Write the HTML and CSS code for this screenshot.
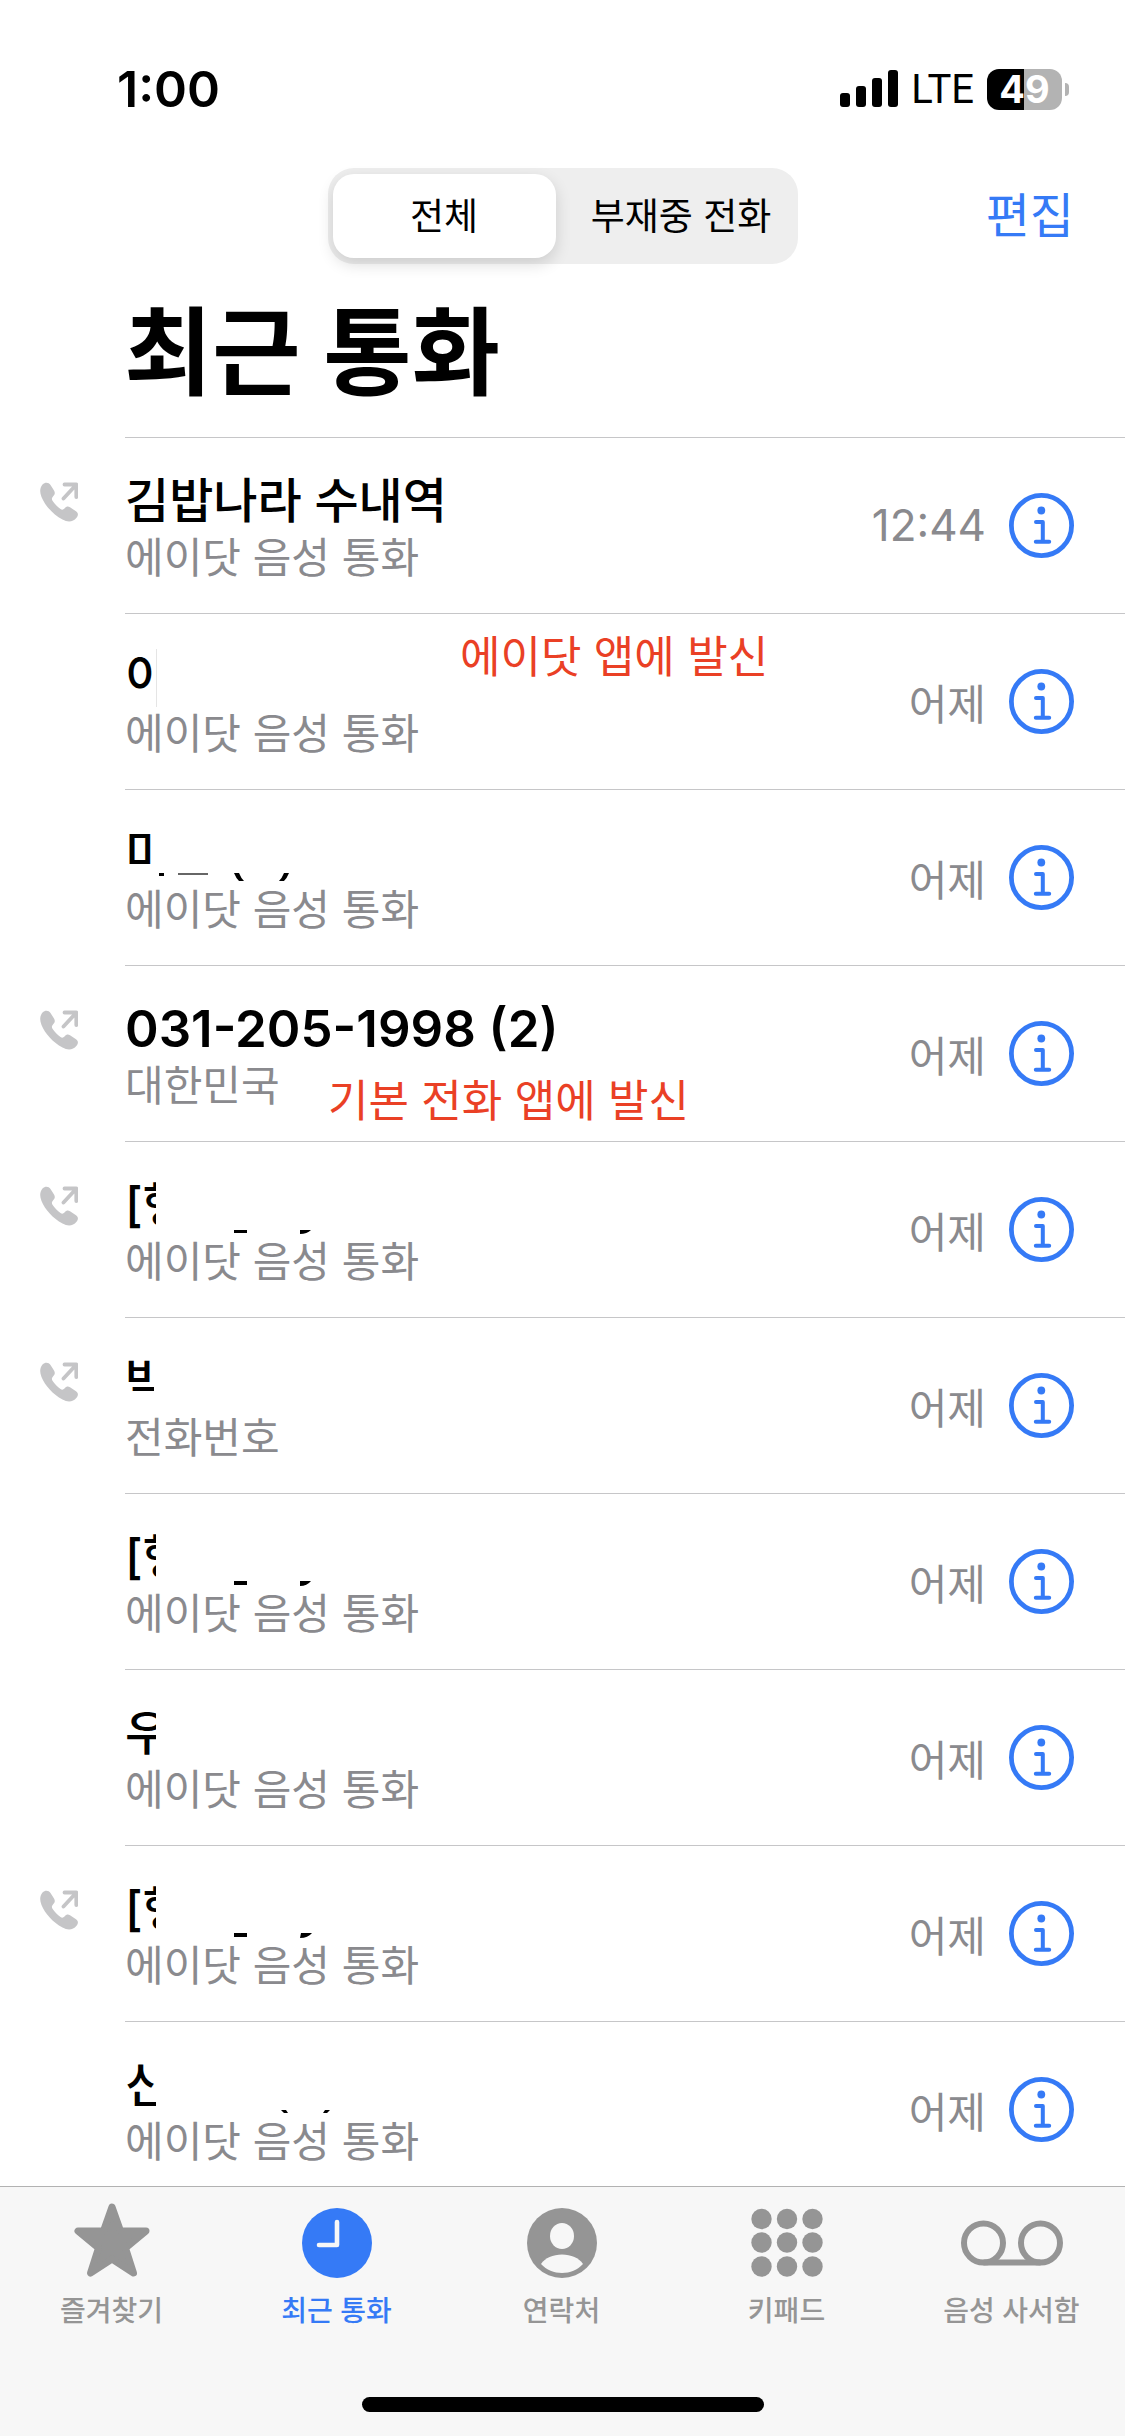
FILE: index.html
```html
<!DOCTYPE html>
<html lang="ko">
<head>
    <meta charset="UTF-8">
    <meta name="viewport" content="width=device-width, initial-scale=1.0">
    <title>최근 통화</title>
    <link rel="stylesheet" href="styles.css">
</head>
<body>
<!-- Shared icons -->
<svg class="sprite" aria-hidden="true">
    <symbol id="icon-outgoing" viewBox="0 0 38 40">
        <path d="M2.500 2.500C5 0 8.500 0 10.500 3L14 8.500C15.300 10.700 15 12.500 13 14.500C11.700 16 11.500 17 12.500 18.800C14.500 22 17.500 25 20.500 27C22 28 23.300 27.800 24.500 26.500C26.500 24.300 28 24 30 25.300L36 29.300C38.300 31 38.600 33 36.500 35.700C33 40 28 40.500 22.500 37.500C13 32.500 5 23.500 1.500 15C-.500 10-.200 6 2.500 2.500Z" fill="#c5c5c7"/>
        <path d="M23.500 16.500L36 3M24.500 2.500H36.300V15" fill="none" stroke="#c5c5c7" stroke-width="3.800" stroke-linecap="round" stroke-linejoin="round"/>
    </symbol>
    <symbol id="icon-info" viewBox="0 0 65 65">
        <circle cx="32.500" cy="32.500" r="30.100" fill="none" stroke="#357af6" stroke-width="4.800"/>
        <circle cx="32.300" cy="17.500" r="3.900" fill="#357af6"/>
        <path d="M27 29H33.800V48.500M26.800 48.700H40.200" fill="none" stroke="#357af6" stroke-width="4" stroke-linecap="round" stroke-linejoin="round"/>
    </symbol>
</svg>

<!-- Status bar -->
<div class="status">
    <span class="clock">1:00</span>
    <div class="status-right">
        <svg class="signal" viewBox="0 0 58 38" aria-hidden="true">
            <rect x="0" y="23" width="10" height="14" rx="3"/>
            <rect x="16" y="16" width="10" height="21" rx="3"/>
            <rect x="32" y="8" width="10" height="29" rx="3"/>
            <rect x="48" y="0" width="10" height="37" rx="3"/>
        </svg>
        <span class="network">LTE</span>
        <span class="battery">49</span>
    </div>
</div>

<!-- Toolbar -->
<header class="toolbar">
    <div class="segmented">
        <button class="segment selected">전체</button>
        <button class="segment">부재중 전화</button>
    </div>
    <button class="edit">편집</button>
</header>
<h1>최근 통화</h1>

<!-- Call list -->
<ul class="calls">
    <li class="call">
        <svg class="outgoing"><use href="#icon-outgoing"/></svg>
        <div class="who">
            <div class="name">김밥나라 수내역</div>
            <div class="kind">에이닷 음성 통화</div>
        </div>
        <time class="clock-time">12:44</time>
        <button class="info" aria-label="정보"><svg><use href="#icon-info"/></svg></button>
    </li>
    <li class="call">
        <div class="who">
            <div class="name"><span class="cut edge">이</span></div>
            <div class="kind">에이닷 음성 통화</div>
        </div>
        <time>어제</time>
        <button class="info" aria-label="정보"><svg><use href="#icon-info"/></svg></button>
        <span class="note note-app">에이닷 앱에 발신</span>
    </li>
    <li class="call">
        <div class="who">
            <div class="name"><span class="cut low">미</span>
                <svg class="bits" viewBox="0 0 220 16"><path d="M34 3h5v3h-5zM109 3h5q2 5 5 8h-5q-3-3-5-8zM159 3h5q-2 5-5 8h-5q3-3 5-8z"/><path d="M53 3h30v2H53z" fill="#666"/></svg>
            </div>
            <div class="kind">에이닷 음성 통화</div>
        </div>
        <time>어제</time>
        <button class="info" aria-label="정보"><svg><use href="#icon-info"/></svg></button>
    </li>
    <li class="call">
        <svg class="outgoing"><use href="#icon-outgoing"/></svg>
        <div class="who">
            <div class="name number">031-205-1998 (2)</div>
            <div class="kind">대한민국</div>
        </div>
        <time>어제</time>
        <button class="info" aria-label="정보"><svg><use href="#icon-info"/></svg></button>
        <span class="note note-phone">기본 전화 앱에 발신</span>
    </li>
    <li class="call">
        <svg class="outgoing"><use href="#icon-outgoing"/></svg>
        <div class="who">
            <div class="name"><span class="cut">[행</span>
                <svg class="bits" viewBox="0 0 220 16"><path d="M109 8h13v3h-13zM175 8h11q-4 4-11 4z"/></svg>
            </div>
            <div class="kind">에이닷 음성 통화</div>
        </div>
        <time>어제</time>
        <button class="info" aria-label="정보"><svg><use href="#icon-info"/></svg></button>
    </li>
    <li class="call">
        <svg class="outgoing"><use href="#icon-outgoing"/></svg>
        <div class="who">
            <div class="name"><span class="cut low">박</span></div>
            <div class="kind">전화번호</div>
        </div>
        <time>어제</time>
        <button class="info" aria-label="정보"><svg><use href="#icon-info"/></svg></button>
    </li>
    <li class="call">
        <div class="who">
            <div class="name"><span class="cut">[행</span>
                <svg class="bits" viewBox="0 0 220 16"><path d="M109 7h13v4h-13zM175 7h11q-4 5-11 5z"/></svg>
            </div>
            <div class="kind">에이닷 음성 통화</div>
        </div>
        <time>어제</time>
        <button class="info" aria-label="정보"><svg><use href="#icon-info"/></svg></button>
    </li>
    <li class="call">
        <div class="who">
            <div class="name"><span class="cut">우</span></div>
            <div class="kind">에이닷 음성 통화</div>
        </div>
        <time>어제</time>
        <button class="info" aria-label="정보"><svg><use href="#icon-info"/></svg></button>
    </li>
    <li class="call">
        <svg class="outgoing"><use href="#icon-outgoing"/></svg>
        <div class="who">
            <div class="name"><span class="cut">[행</span>
                <svg class="bits" viewBox="0 0 220 16"><path d="M109 7h13v4h-13zM176 7h11q-4 5-12 5z"/></svg>
            </div>
            <div class="kind">에이닷 음성 통화</div>
        </div>
        <time>어제</time>
        <button class="info" aria-label="정보"><svg><use href="#icon-info"/></svg></button>
    </li>
    <li class="call">
        <div class="who">
            <div class="name"><span class="cut">신</span>
                <svg class="bits" viewBox="0 0 220 16"><path d="M156 8h5l2 3h-4zM200 8h5l-3 3h-4z"/></svg>
            </div>
            <div class="kind">에이닷 음성 통화</div>
        </div>
        <time>어제</time>
        <button class="info" aria-label="정보"><svg><use href="#icon-info"/></svg></button>
    </li>
</ul>

<!-- Tab bar -->
<nav class="tabs">
    <a class="tab" href="#">
        <svg viewBox="0 0 104 80" aria-hidden="true">
            <path d="M52 8L60.500 32H86L65.500 49L73.500 74L52 60L30.500 74L38.500 49L18 32H43.500Z" fill="#959595" stroke="#959595" stroke-width="7" stroke-linejoin="round"/>
        </svg>
        즐겨찾기
    </a>
    <a class="tab active" href="#">
        <svg viewBox="0 0 104 80" aria-hidden="true">
            <circle cx="52" cy="44" r="35" fill="#357af6"/>
            <path d="M52 23V46H34" fill="none" stroke="#f7f7f7" stroke-width="4.600" stroke-linecap="round" stroke-linejoin="round"/>
        </svg>
        최근 통화
    </a>
    <a class="tab" href="#">
        <svg viewBox="0 0 104 80" aria-hidden="true">
            <circle cx="52" cy="44" r="35" fill="#959595"/>
            <ellipse cx="52" cy="37" rx="12" ry="13" fill="#f7f7f7"/>
            <path d="M31 65C35 59 43 55.500 52 55.500S69 59 73 65C67.500 71 60 74 52 74S36.500 71 31 65Z" fill="#f7f7f7"/>
        </svg>
        연락처
    </a>
    <a class="tab" href="#">
        <svg viewBox="0 0 104 80" aria-hidden="true" fill="#959595">
            <circle cx="26.500" cy="20" r="10.200"/><circle cx="52" cy="20" r="10.200"/><circle cx="77.500" cy="20" r="10.200"/>
            <circle cx="26.500" cy="43.500" r="10.200"/><circle cx="52" cy="43.500" r="10.200"/><circle cx="77.500" cy="43.500" r="10.200"/>
            <circle cx="26.500" cy="67.500" r="10.200"/><circle cx="52" cy="67.500" r="10.200"/><circle cx="77.500" cy="67.500" r="10.200"/>
        </svg>
        키패드
    </a>
    <a class="tab" href="#">
        <svg viewBox="0 0 104 80" aria-hidden="true" fill="none" stroke="#959595" stroke-width="6">
            <circle cx="23.500" cy="44" r="19.500"/>
            <circle cx="80.500" cy="44" r="19.500"/>
            <path d="M23.500 63.500H80.500"/>
        </svg>
        음성 사서함
    </a>
    <div class="home"></div>
</nav>
</body>
</html>
```
FILE: styles.css
```css
* {
    box-sizing: border-box;
}
body {
    display: flex;
    flex-direction: column;
    height: 100vh;
    margin: 0;
    background: #fff;
    color: #000;
    font-family: Inter, "Noto Sans CJK KR", sans-serif;
}
button {
    padding: 0;
    border: none;
    background: none;
    color: inherit;
    font: inherit;
    cursor: pointer;
}
.sprite {
    position: absolute;
    width: 0;
    height: 0;
}

/* Status bar */
.status {
    display: flex;
    justify-content: space-between;
    align-items: center;
    height: 168px;
    padding: 10px 56px 0 117px;
}
.clock {
    font-size: 50px;
    font-weight: 600;
}
.status-right {
    display: flex;
    align-items: center;
}
.signal {
    width: 58px;
    height: 38px;
}
.network {
    margin: 0 13px;
    font-size: 40px;
    font-family: Roboto, sans-serif;
}
.battery {
    position: relative;
    width: 75px;
    margin-right: 7px;
    border-radius: 12px;
    background: linear-gradient(to right, #000 50%, #b3b3b3 50%);
    color: #fff;
    font-size: 38px;
    font-weight: 700;
    line-height: 41px;
    text-align: center;
}
.battery::after {
    content: "";
    position: absolute;
    top: 14px;
    right: -7px;
    width: 4px;
    height: 13px;
    border-radius: 0 4px 4px 0;
    background: #b3b3b3;
}

/* Toolbar */
.toolbar {
    display: grid;
    grid-template-columns: 1fr 470px 1fr;
    align-items: center;
    padding: 0 51px;
}
.segmented {
    display: grid;
    grid-template-columns: 1fr 1fr;
    gap: 14px;
    grid-column: 2;
    height: 96px;
    padding: 6px 5px;
    border-radius: 26px;
    background: #eee;
}
.segment {
    padding-bottom: 4px;
    border-radius: 21px;
    font-size: 37px;
    white-space: nowrap;
}
.segment.selected {
    background: #fff;
    box-shadow: 0 6px 16px rgba(0, 0, 0, 0.14);
}
.edit {
    justify-self: end;
    padding-bottom: 8px;
    color: #357af6;
    font-size: 48px;
}
h1 {
    margin: 0;
    padding: 28px 51px 25px 124px;
    font-size: 96px;
    font-weight: 700;
    line-height: 120px;
}

/* Call list */
.calls {
    flex: 1;
    min-height: 0;
    margin: 0;
    padding: 0;
    overflow: hidden;
    list-style: none;
}
.call {
    position: relative;
    display: grid;
    grid-template-columns: 85px 1fr auto 65px;
    height: 176px;
    padding: 0 51px 0 40px;
}
.call::before {
    content: "";
    position: absolute;
    top: 0;
    right: 0;
    left: 125px;
    height: 1px;
    background: #c6c6c8;
}
.outgoing {
    grid-column: 1;
    width: 38px;
    height: 40px;
    margin-top: 45px;
}
.who {
    grid-column: 2;
    padding-top: 36px;
}
.name {
    position: relative;
    height: 58px;
    font-size: 48px;
    font-weight: 500;
    line-height: 56px;
    white-space: nowrap;
}
.name.number {
    font-size: 51px;
    font-weight: 600;
}
.cut {
    display: block;
    width: 31px;
    height: 58px;
    overflow: hidden;
}
.cut.edge {
    width: 32px;
    border-right: 1px solid #e5e5e5;
}
.cut.low {
    width: 29px;
    height: 40px;
}
.bits {
    position: absolute;
    top: 45px;
    left: 0;
    width: 220px;
    height: 16px;
}
.kind {
    color: #8a8a8e;
    font-size: 42px;
    line-height: 54px;
}
time {
    align-self: center;
    margin-right: 23px;
    color: #8a8a8e;
    font-size: 42px;
}
.clock-time {
    font-size: 44px;
}
.info {
    align-self: center;
    height: 65px;
}
.info svg {
    display: block;
    width: 65px;
    height: 65px;
}

/* Notes written over the list */
.note {
    position: absolute;
    color: #ea4025;
    font-size: 44px;
    line-height: 52px;
}
.note-app {
    top: 18px;
    left: 460px;
}
.note-phone {
    top: 110px;
    left: 328px;
}

/* Tab bar */
.tabs {
    display: grid;
    grid-template-columns: repeat(5, 1fr);
    height: 250px;
    border-top: 1px solid #b2b2b2;
    background: #f7f7f7;
}
.tab {
    display: flex;
    flex-direction: column;
    align-items: center;
    padding: 12px 2px 0 0;
    color: #959595;
    font-size: 28px;
    font-weight: 500;
    line-height: 40px;
    text-decoration: none;
}
.tab svg {
    width: 104px;
    height: 80px;
    margin-bottom: 12px;
}
.tab.active {
    color: #357af6;
}
.home {
    grid-column: 1 / -1;
    align-self: end;
    justify-self: center;
    width: 402px;
    height: 15px;
    margin-bottom: 24px;
    border-radius: 8px;
    background: #000;
}
```
